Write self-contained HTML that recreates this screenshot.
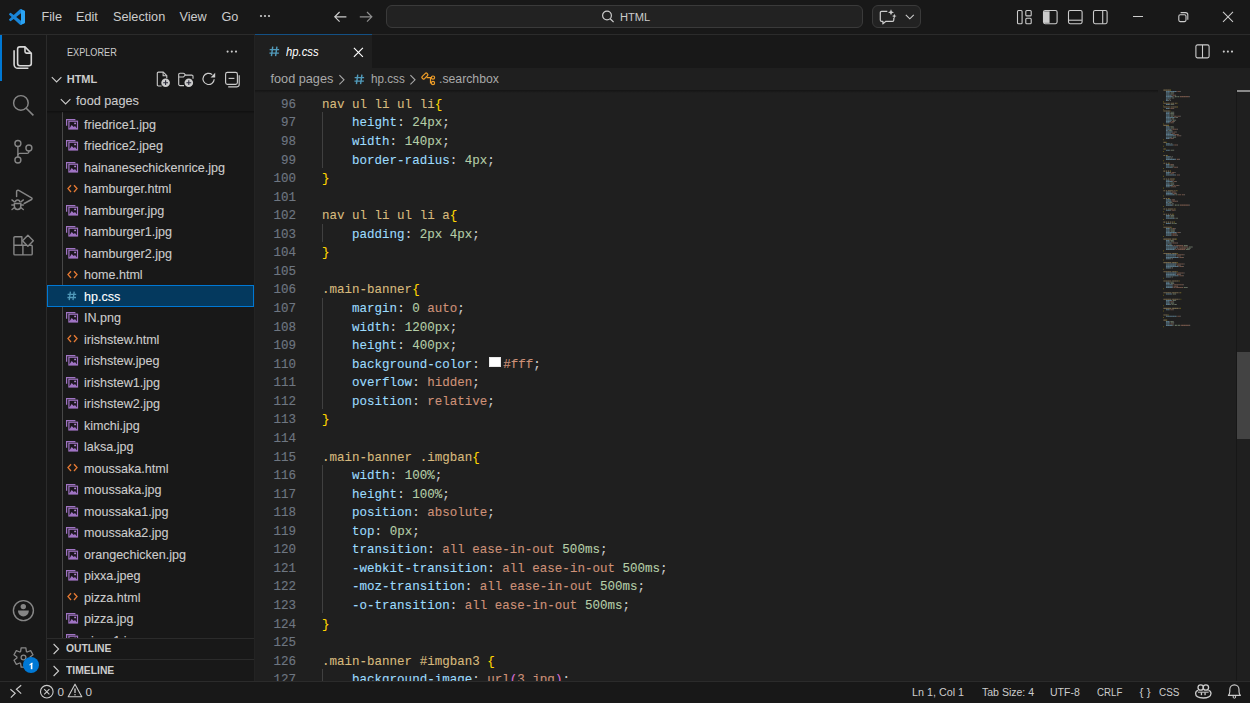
<!DOCTYPE html>
<html><head><meta charset="utf-8">
<style>
*{margin:0;padding:0;box-sizing:border-box}
html,body{width:1250px;height:703px;overflow:hidden;background:#181818;font-family:"Liberation Sans",sans-serif;color:#cccccc}
.abs{position:absolute}
svg{position:absolute;overflow:visible}
#title{left:0;top:0;width:1250px;height:35px;background:#181818;border-bottom:1px solid #2b2b2b}
.menu{position:absolute;top:0;height:33px;line-height:33px;font-size:12.7px;color:#cccccc;white-space:nowrap}
#act{left:0;top:35px;width:47px;height:647px;background:#181818;border-right:1px solid #2b2b2b}
#side{left:47px;top:35px;width:208px;height:647px;background:#181818;border-right:1px solid #232323;overflow:hidden}
#tabs{left:255px;top:34px;width:995px;height:34px;background:#181818;border-bottom:1px solid #2b2b2b}
#crumbs{left:255px;top:67px;width:995px;height:23px;background:#1f1f1f}
#editor{left:255px;top:90px;width:995px;height:590px;background:#1f1f1f;overflow:hidden}
#status{left:0;top:680px;width:1250px;height:23px;background:#181818;border-top:1px solid #2b2b2b}
.row{position:absolute;left:0;width:207px;height:21.5px;font-size:12.7px;line-height:21.5px;white-space:nowrap;color:#cccccc}
.row .t{position:absolute;left:37px;top:0}
.code{position:absolute;left:67px;font-family:"Liberation Mono",monospace;font-size:12.53px;-webkit-text-stroke:0.1px currentColor;white-space:pre;height:18.55px;line-height:18.55px;color:#cccccc}
.ln{position:absolute;left:0;width:41px;text-align:right;font-family:"Liberation Mono",monospace;font-size:12.53px;-webkit-text-stroke:0.15px currentColor;color:#6e7681;height:18.55px;line-height:18.55px}
.guide{position:absolute;left:67px;width:1px;background:#404040}
.s{color:#d7ba7d}.p{color:#9cdcfe}.n{color:#b5cea8}.v{color:#ce9178}.b{color:#ffd700}.o{color:#da70d6}
.sb{position:absolute;top:0;height:22px;line-height:22px;font-size:11.7px;color:#cccccc;white-space:nowrap}
</style></head><body>

<div id="title" class="abs"></div>
<svg style="left:9px;top:9px" width="16" height="16" viewBox="0 0 100 100"><path fill="#1a86d8" fill-rule="evenodd" d="M96.46 10.8L75.86.87a6.23 6.23 0 0 0-7.1 1.2L29.4 38.04 12.24 25.02a4.16 4.16 0 0 0-5.32.24L1.41 30.26a4.17 4.17 0 0 0 0 6.16L16.29 50 1.41 63.58a4.17 4.17 0 0 0 0 6.16l5.51 5a4.16 4.16 0 0 0 5.32.24l17.16-13.02 39.36 35.97a6.22 6.22 0 0 0 7.1 1.2l20.6-9.92A6.24 6.24 0 0 0 100 83.57V16.43a6.24 6.24 0 0 0-3.54-5.63zM75.02 72.7L45.11 50l29.91-22.7z"/><path fill="#2aa3f3" d="M75.02 1.2L96.46 10.8A6.24 6.24 0 0 1 100 16.43V83.57a6.24 6.24 0 0 1-3.54 5.63L75.02 98.8z"/></svg>
<div class="abs" style="left:41.5px;top:9.58px;font-family:'Liberation Sans';font-size:12.7px;line-height:15.24px;color:#cccccc;font-weight:normal;font-style:normal;white-space:pre;">File</div>
<div class="abs" style="left:76px;top:9.58px;font-family:'Liberation Sans';font-size:12.7px;line-height:15.24px;color:#cccccc;font-weight:normal;font-style:normal;white-space:pre;">Edit</div>
<div class="abs" style="left:113px;top:9.58px;font-family:'Liberation Sans';font-size:12.7px;line-height:15.24px;color:#cccccc;font-weight:normal;font-style:normal;white-space:pre;">Selection</div>
<div class="abs" style="left:179.5px;top:9.58px;font-family:'Liberation Sans';font-size:12.7px;line-height:15.24px;color:#cccccc;font-weight:normal;font-style:normal;white-space:pre;">View</div>
<div class="abs" style="left:221.5px;top:9.58px;font-family:'Liberation Sans';font-size:12.7px;line-height:15.24px;color:#cccccc;font-weight:normal;font-style:normal;white-space:pre;">Go</div>
<svg style="left:259px;top:14px" width="12" height="4"><circle cx="2" cy="2" r="1.1" fill="#cccccc"/><circle cx="6" cy="2" r="1.1" fill="#cccccc"/><circle cx="10" cy="2" r="1.1" fill="#cccccc"/></svg>
<svg style="left:333px;top:10px" width="15" height="14" viewBox="0 0 15 14"><path d="M1.8 6.8H13.4M6.6 2L1.8 6.8 6.6 11.6" stroke="#cccccc" stroke-width="1.2" fill="none"/></svg>
<svg style="left:359px;top:10px" width="15" height="14" viewBox="0 0 15 14"><path d="M12.8 6.8H0.8M8 2L12.8 6.8 8 11.6" stroke="#8f8f8f" stroke-width="1.2" fill="none"/></svg>
<div class="abs" style="left:386px;top:5px;width:477px;height:23px;border:1px solid #3a3a3a;border-radius:6px;background:#222222"></div>
<svg style="left:601px;top:10px" width="14" height="13" viewBox="0 0 14 13"><circle cx="6" cy="5.5" r="4.4" stroke="#cccccc" stroke-width="1.2" fill="none"/><path d="M9.2 8.7L12.6 12.1" stroke="#cccccc" stroke-width="1.3"/></svg>
<div class="abs" style="left:620px;top:9.83px;font-family:'Liberation Sans';font-size:11.7px;line-height:14.04px;color:#cccccc;font-weight:normal;font-style:normal;white-space:pre;transform:scaleX(0.95);transform-origin:0 0;">HTML</div>
<div class="abs" style="left:872px;top:5px;width:49px;height:23px;border:1px solid #3a3a3a;border-radius:6px;background:#222222"></div>
<svg style="left:879px;top:9px" width="18" height="16" viewBox="0 0 18 16"><path d="M8.3 2.4H2.6a1.3 1.3 0 0 0-1.3 1.3v7.3a1.3 1.3 0 0 0 1.3 1.3h1.3v2.6l3-2.6h6.6a1.3 1.3 0 0 0 1.3-1.3V8.8" stroke="#cccccc" stroke-width="1.2" fill="none" stroke-linejoin="round"/><path d="M12 0.3l.9 2.1 2.1.9-2.1.9-.9 2.1-.9-2.1-2.1-.9 2.1-.9z" fill="#cccccc"/><path d="M15.3 4.8l.7 1.6 1.6.7-1.6.7-.7 1.6-.7-1.6-1.6-.7 1.6-.7z" fill="#cccccc"/></svg>
<svg style="left:905px;top:14px" width="10" height="6" viewBox="0 0 10 6"><path d="M0.8 0.8L4.8 4.8 8.8 0.8" stroke="#cccccc" stroke-width="1.1" fill="none"/></svg>
<svg style="left:1016px;top:9px" width="17" height="16" viewBox="0 0 17 16"><rect x="1.5" y="1.5" width="4.6" height="13.2" rx="1" stroke="#cccccc" stroke-width="1.1" fill="none"/><rect x="9.8" y="1.5" width="5.4" height="5.4" rx="1" stroke="#cccccc" stroke-width="1.1" fill="none"/><rect x="9.8" y="9.3" width="5.4" height="5.4" rx="1" stroke="#cccccc" stroke-width="1.1" fill="none"/></svg>
<svg style="left:1042px;top:9px" width="17" height="16" viewBox="0 0 17 16"><rect x="1.5" y="1.5" width="13.6" height="13.2" rx="1.6" stroke="#cccccc" stroke-width="1.1" fill="none"/><path d="M2 2.3h5.6v11.6H2z" fill="#cccccc"/></svg>
<svg style="left:1067px;top:9px" width="17" height="16" viewBox="0 0 17 16"><rect x="1.5" y="1.5" width="13.6" height="13.2" rx="1.6" stroke="#cccccc" stroke-width="1.1" fill="none"/><path d="M1.8 11.2h13" stroke="#cccccc" stroke-width="1.1"/></svg>
<svg style="left:1092px;top:9px" width="17" height="16" viewBox="0 0 17 16"><rect x="1.5" y="1.5" width="13.6" height="13.2" rx="1.6" stroke="#cccccc" stroke-width="1.1" fill="none"/><path d="M10.7 1.8v13" stroke="#cccccc" stroke-width="1.1"/></svg>
<div class="abs" style="left:1133.2px;top:16px;width:9.8px;height:1px;background:#cccccc"></div>
<svg style="left:1177px;top:11px" width="13" height="13" viewBox="0 0 13 13"><rect x="1.8" y="3.7" width="7.2" height="6.9" rx="1.5" stroke="#cccccc" stroke-width="1.1" fill="none"/><path d="M3.6 1.6h5a2.2 2.2 0 0 1 2.2 2.2v5" stroke="#cccccc" stroke-width="1.1" fill="none"/></svg>
<svg style="left:1222px;top:11px" width="12" height="12" viewBox="0 0 12 12"><path d="M1 0.8L11 10.8M11 0.8L1 10.8" stroke="#cccccc" stroke-width="1.05" fill="none"/></svg>
<div id="act" class="abs"></div>
<div class="abs" style="left:0;top:35px;width:2px;height:46px;background:#0078d4"></div>
<svg style="left:11px;top:45px" width="24" height="26" viewBox="0 0 24 26"><path d="M8.8 1.9H14l6.3 6.3v10.3a2.2 2.2 0 0 1-2.2 2.2H8.8a2.2 2.2 0 0 1-2.2-2.2V4.1a2.2 2.2 0 0 1 2.2-2.2z" stroke="#d7d7d7" stroke-width="1.6" fill="none" stroke-linejoin="round"/><path d="M14 2v4.6a1.5 1.5 0 0 0 1.5 1.5h4.7" stroke="#d7d7d7" stroke-width="1.6" fill="none"/><path d="M3.1 5.2v14.2a3.9 3.9 0 0 0 3.9 3.9h10.4" stroke="#d7d7d7" stroke-width="1.6" fill="none"/></svg>
<svg style="left:12.3px;top:93.7px" width="23" height="23" viewBox="0 0 23 23"><circle cx="8.9" cy="8.9" r="7.3" stroke="#868686" stroke-width="1.45" fill="none"/><path d="M14.2 14.2L21.4 21.4" stroke="#868686" stroke-width="1.6"/></svg>
<svg style="left:13.4px;top:139.2px" width="22" height="26" viewBox="0 0 22 26"><circle cx="4.9" cy="4.5" r="3" stroke="#868686" stroke-width="1.4" fill="none"/><circle cx="4.9" cy="21" r="3" stroke="#868686" stroke-width="1.4" fill="none"/><circle cx="15.9" cy="9" r="3" stroke="#868686" stroke-width="1.4" fill="none"/><path d="M4.9 7.5V18" stroke="#868686" stroke-width="1.4"/><path d="M15.9 12v0.6a1.8 1.8 0 0 1-1.8 1.8H6.8a1.9 1.9 0 0 0-1.9 1.9" stroke="#868686" stroke-width="1.4" fill="none"/></svg>
<svg style="left:10px;top:188px" width="24" height="24" viewBox="0 0 24 24"><path d="M6.6 8.6V3.6a1.4 1.4 0 0 1 2.1-1.2l12.9 7.4a1 1 0 0 1 0 1.7l-7.4 4" stroke="#868686" stroke-width="1.45" fill="none" stroke-linejoin="round" stroke-linecap="round"/><path d="M4.4 15.4h6.4v2.8a3.2 3.2 0 0 1-6.4 0z" stroke="#868686" stroke-width="1.45" fill="none"/><path d="M5.4 14.2a2.2 2.2 0 0 1 4.4 0" stroke="#868686" stroke-width="1.45" fill="none"/><path d="M1.9 11.9l2.6 2M13.4 11.9l-2.6 2M1.8 17h2.6M10.8 17h2.6M2 21.5l2.6-2M13.3 21.5l-2.6-2" stroke="#868686" stroke-width="1.35" stroke-linecap="round"/></svg>
<svg style="left:12px;top:234px" width="23" height="23" viewBox="0 0 23 23"><path d="M1.9 11.3V3.8a1 1 0 0 1 1-1h7v8.5zM1.9 11.3v8.6a1 1 0 0 0 1 1h8V11.3zM10.9 11.3h8.3a1 1 0 0 1 1 1v7.6a1 1 0 0 1-1 1h-8.3z" stroke="#868686" stroke-width="1.4" fill="none" stroke-linejoin="round"/><path d="M15.9 1.2l5.4 5.5-5.4 5.5-5.4-5.5z" stroke="#868686" stroke-width="1.4" fill="#181818" stroke-linejoin="round"/></svg>
<svg style="left:12px;top:599px" width="23" height="23" viewBox="0 0 23 23"><circle cx="11.4" cy="11.6" r="10" stroke="#868686" stroke-width="1.4" fill="none"/><circle cx="11.3" cy="7.6" r="2.7" fill="#868686"/><path d="M6 11.6h10.8v.4a5.4 5.4 0 0 1-10.8 0z" fill="#868686"/></svg>
<svg style="left:12px;top:646px" width="23" height="23" viewBox="0 0 23 23"><path d="M9.15 1.88 L13.85 1.88 L14.43 5.59 L15.16 6.01 L18.65 4.65 L21.00 8.73 L18.09 11.08 L18.09 11.92 L21.00 14.27 L18.65 18.35 L15.16 16.99 L14.43 17.41 L13.85 21.12 L9.15 21.12 L8.57 17.41 L7.84 16.99 L4.35 18.35 L2.00 14.27 L4.91 11.92 L4.91 11.08 L2.00 8.73 L4.35 4.65 L7.84 6.01 L8.57 5.59Z" stroke="#868686" stroke-width="1.3" fill="none" stroke-linejoin="round"/><circle cx="11.5" cy="11.5" r="2.4" stroke="#868686" stroke-width="1.3" fill="none"/></svg>
<div class="abs" style="left:23.3px;top:657.4px;width:15.4px;height:15.4px;border-radius:8px;background:#0078d4"></div>
<svg style="left:28px;top:661px" width="7" height="9" viewBox="0 0 7 9"><path d="M3.6 1.9V8.2" stroke="#ffffff" stroke-width="1.6"/><path d="M1.4 3.4L4.4 1.4V2.9L1.4 4.6z" fill="#ffffff"/></svg>
<div id="side" class="abs"></div>
<div class="abs" style="left:67px;top:43px;font-size:11px;line-height:18px;white-space:pre;color:#cccccc;transform:scaleX(0.83);transform-origin:0 0">EXPLORER</div>
<svg style="left:226px;top:50px" width="12" height="4"><circle cx="1.6" cy="1.6" r="1.05" fill="#cccccc"/><circle cx="5.8" cy="1.6" r="1.05" fill="#cccccc"/><circle cx="10" cy="1.6" r="1.05" fill="#cccccc"/></svg>
<svg style="left:51px;top:76px" width="12" height="8" viewBox="0 0 12 8"><path d="M0.8 1.2L5.6 6 10.4 1.2" stroke="#cccccc" stroke-width="1.1" fill="none"/></svg>
<div class="abs" style="left:66.7px;top:72.99px;font-family:'Liberation Sans';font-size:11px;line-height:13.2px;color:#cccccc;font-weight:bold;font-style:normal;white-space:pre;">HTML</div>
<svg style="left:155px;top:71px" width="16" height="17" viewBox="0 0 16 17"><path d="M6.6 15H3.4a1.1 1.1 0 0 1-1.1-1.1V2.2a1.1 1.1 0 0 1 1.1-1.1h4.9l3.5 3.5v2.6" stroke="#cccccc" stroke-width="1.1" fill="none" stroke-linejoin="round"/><path d="M8.1 1.3v3.4h3.6" stroke="#cccccc" stroke-width="1.05" fill="none"/><circle cx="10.6" cy="11.7" r="4.3" fill="#cccccc"/><path d="M10.6 9.3v4.8M8.2 11.7h4.8" stroke="#2a2a3a" stroke-width="1.1"/></svg>
<svg style="left:177px;top:71px" width="18" height="17" viewBox="0 0 18 17"><path d="M7 14.6H3a1.3 1.3 0 0 1-1.3-1.3V3.6A1.3 1.3 0 0 1 3 2.3h3.4a1.2 1.2 0 0 1 .9.4l1.2 1.4h6.2a1.3 1.3 0 0 1 1.3 1.3v2.4" stroke="#cccccc" stroke-width="1.1" fill="none" stroke-linejoin="round"/><path d="M1.8 6h4.6l1.8-1.8" stroke="#cccccc" stroke-width="1.05" fill="none"/><circle cx="11.8" cy="11.7" r="4.3" fill="#cccccc"/><path d="M11.8 9.3v4.8M9.4 11.7h4.8" stroke="#2a2a3a" stroke-width="1.1"/></svg>
<svg style="left:202px;top:72px" width="15" height="14" viewBox="0 0 15 14"><path d="M12.2 7.2a5.6 5.6 0 1 1-2-4.6" stroke="#cccccc" stroke-width="1.2" fill="none"/><path d="M13.2 0.8v4.6H8.6z" fill="#cccccc"/></svg>
<svg style="left:224px;top:71px" width="17" height="17" viewBox="0 0 17 17"><rect x="1.6" y="1.4" width="11.8" height="12" rx="1.8" stroke="#cccccc" stroke-width="1.15" fill="none"/><path d="M4.6 7.4h5.8" stroke="#cccccc" stroke-width="1.1"/><path d="M15.2 4.2v9.4a2.2 2.2 0 0 1-2.2 2.2H4.2" stroke="#cccccc" stroke-width="1.15" fill="none"/></svg>
<svg style="left:60px;top:98px" width="12" height="8" viewBox="0 0 12 8"><path d="M0.8 1.2L5.6 6 10.4 1.2" stroke="#cccccc" stroke-width="1.1" fill="none"/></svg>
<div class="abs" style="left:76.1px;top:94.08px;font-family:'Liberation Sans';font-size:12.7px;line-height:15.24px;color:#cccccc;font-weight:normal;font-style:normal;white-space:pre;-webkit-text-stroke:0.1px currentColor;">food pages</div>
<div class="abs" style="left:62px;top:112px;width:1px;height:526px;background:#474747"></div>
<div class="abs" style="left:47px;top:112px;width:207px;height:526px;overflow:hidden">
<svg style="left:19px;top:6.90px" width="13" height="11" viewBox="0 0 13 11"><path d="M0.6 6.8V0.6H9.4" stroke="#a074c4" stroke-width="1.2" fill="none"/><rect x="2.9" y="2.2" width="8.6" height="7.8" stroke="#a074c4" stroke-width="1.2" fill="#1c1620"/><path d="M3 9.9L5.7 6 7.7 7.9 9 7 11.4 9.9z" fill="#a074c4"/><circle cx="9.1" cy="4.4" r="0.95" fill="#b08ad0"/></svg>
<div class="abs" style="left:37.3px;top:5.98px;font-family:'Liberation Sans';font-size:12.7px;line-height:15.24px;color:#cccccc;font-weight:normal;font-style:normal;white-space:pre;transform:scaleX(0.99);transform-origin:0 0;-webkit-text-stroke:0.1px currentColor;">friedrice1.jpg</div>
<svg style="left:19px;top:28.38px" width="13" height="11" viewBox="0 0 13 11"><path d="M0.6 6.8V0.6H9.4" stroke="#a074c4" stroke-width="1.2" fill="none"/><rect x="2.9" y="2.2" width="8.6" height="7.8" stroke="#a074c4" stroke-width="1.2" fill="#1c1620"/><path d="M3 9.9L5.7 6 7.7 7.9 9 7 11.4 9.9z" fill="#a074c4"/><circle cx="9.1" cy="4.4" r="0.95" fill="#b08ad0"/></svg>
<div class="abs" style="left:37.3px;top:27.46px;font-family:'Liberation Sans';font-size:12.7px;line-height:15.24px;color:#cccccc;font-weight:normal;font-style:normal;white-space:pre;transform:scaleX(0.99);transform-origin:0 0;-webkit-text-stroke:0.1px currentColor;">friedrice2.jpeg</div>
<svg style="left:19px;top:49.86px" width="13" height="11" viewBox="0 0 13 11"><path d="M0.6 6.8V0.6H9.4" stroke="#a074c4" stroke-width="1.2" fill="none"/><rect x="2.9" y="2.2" width="8.6" height="7.8" stroke="#a074c4" stroke-width="1.2" fill="#1c1620"/><path d="M3 9.9L5.7 6 7.7 7.9 9 7 11.4 9.9z" fill="#a074c4"/><circle cx="9.1" cy="4.4" r="0.95" fill="#b08ad0"/></svg>
<div class="abs" style="left:37.3px;top:48.94px;font-family:'Liberation Sans';font-size:12.7px;line-height:15.24px;color:#cccccc;font-weight:normal;font-style:normal;white-space:pre;transform:scaleX(0.99);transform-origin:0 0;-webkit-text-stroke:0.1px currentColor;">hainanesechickenrice.jpg</div>
<svg style="left:19.5px;top:71.84px" width="12" height="10" viewBox="0 0 12 10"><path d="M4 1.2L1 4.6 4 8M7 1.2L10 4.6 7 8" stroke="#e37933" stroke-width="1.35" fill="none"/></svg>
<div class="abs" style="left:37.3px;top:70.42px;font-family:'Liberation Sans';font-size:12.7px;line-height:15.24px;color:#cccccc;font-weight:normal;font-style:normal;white-space:pre;transform:scaleX(0.99);transform-origin:0 0;-webkit-text-stroke:0.1px currentColor;">hamburger.html</div>
<svg style="left:19px;top:92.82px" width="13" height="11" viewBox="0 0 13 11"><path d="M0.6 6.8V0.6H9.4" stroke="#a074c4" stroke-width="1.2" fill="none"/><rect x="2.9" y="2.2" width="8.6" height="7.8" stroke="#a074c4" stroke-width="1.2" fill="#1c1620"/><path d="M3 9.9L5.7 6 7.7 7.9 9 7 11.4 9.9z" fill="#a074c4"/><circle cx="9.1" cy="4.4" r="0.95" fill="#b08ad0"/></svg>
<div class="abs" style="left:37.3px;top:91.90px;font-family:'Liberation Sans';font-size:12.7px;line-height:15.24px;color:#cccccc;font-weight:normal;font-style:normal;white-space:pre;transform:scaleX(0.99);transform-origin:0 0;-webkit-text-stroke:0.1px currentColor;">hamburger.jpg</div>
<svg style="left:19px;top:114.30px" width="13" height="11" viewBox="0 0 13 11"><path d="M0.6 6.8V0.6H9.4" stroke="#a074c4" stroke-width="1.2" fill="none"/><rect x="2.9" y="2.2" width="8.6" height="7.8" stroke="#a074c4" stroke-width="1.2" fill="#1c1620"/><path d="M3 9.9L5.7 6 7.7 7.9 9 7 11.4 9.9z" fill="#a074c4"/><circle cx="9.1" cy="4.4" r="0.95" fill="#b08ad0"/></svg>
<div class="abs" style="left:37.3px;top:113.38px;font-family:'Liberation Sans';font-size:12.7px;line-height:15.24px;color:#cccccc;font-weight:normal;font-style:normal;white-space:pre;transform:scaleX(0.99);transform-origin:0 0;-webkit-text-stroke:0.1px currentColor;">hamburger1.jpg</div>
<svg style="left:19px;top:135.78px" width="13" height="11" viewBox="0 0 13 11"><path d="M0.6 6.8V0.6H9.4" stroke="#a074c4" stroke-width="1.2" fill="none"/><rect x="2.9" y="2.2" width="8.6" height="7.8" stroke="#a074c4" stroke-width="1.2" fill="#1c1620"/><path d="M3 9.9L5.7 6 7.7 7.9 9 7 11.4 9.9z" fill="#a074c4"/><circle cx="9.1" cy="4.4" r="0.95" fill="#b08ad0"/></svg>
<div class="abs" style="left:37.3px;top:134.86px;font-family:'Liberation Sans';font-size:12.7px;line-height:15.24px;color:#cccccc;font-weight:normal;font-style:normal;white-space:pre;transform:scaleX(0.99);transform-origin:0 0;-webkit-text-stroke:0.1px currentColor;">hamburger2.jpg</div>
<svg style="left:19.5px;top:157.76px" width="12" height="10" viewBox="0 0 12 10"><path d="M4 1.2L1 4.6 4 8M7 1.2L10 4.6 7 8" stroke="#e37933" stroke-width="1.35" fill="none"/></svg>
<div class="abs" style="left:37.3px;top:156.34px;font-family:'Liberation Sans';font-size:12.7px;line-height:15.24px;color:#cccccc;font-weight:normal;font-style:normal;white-space:pre;transform:scaleX(0.99);transform-origin:0 0;-webkit-text-stroke:0.1px currentColor;">home.html</div>
<div class="abs" style="left:0;top:173.04px;width:207px;height:21.5px;background:#04395e;border:1px solid #0078d4"></div>
<svg style="left:20px;top:178.74px" width="10" height="10" viewBox="0 0 10 10"><path d="M3.4 0.6L2.2 9.2M7.2 0.6L6 9.2M0.6 3.3h8.6M0.4 6.5h8.6" stroke="#519aba" stroke-width="1.3" fill="none"/></svg>
<div class="abs" style="left:37.3px;top:177.82px;font-family:'Liberation Sans';font-size:12.7px;line-height:15.24px;color:#ffffff;font-weight:normal;font-style:normal;white-space:pre;transform:scaleX(0.99);transform-origin:0 0;-webkit-text-stroke:0.1px currentColor;">hp.css</div>
<svg style="left:19px;top:200.22px" width="13" height="11" viewBox="0 0 13 11"><path d="M0.6 6.8V0.6H9.4" stroke="#a074c4" stroke-width="1.2" fill="none"/><rect x="2.9" y="2.2" width="8.6" height="7.8" stroke="#a074c4" stroke-width="1.2" fill="#1c1620"/><path d="M3 9.9L5.7 6 7.7 7.9 9 7 11.4 9.9z" fill="#a074c4"/><circle cx="9.1" cy="4.4" r="0.95" fill="#b08ad0"/></svg>
<div class="abs" style="left:37.3px;top:199.30px;font-family:'Liberation Sans';font-size:12.7px;line-height:15.24px;color:#cccccc;font-weight:normal;font-style:normal;white-space:pre;transform:scaleX(0.99);transform-origin:0 0;-webkit-text-stroke:0.1px currentColor;">IN.png</div>
<svg style="left:19.5px;top:222.20px" width="12" height="10" viewBox="0 0 12 10"><path d="M4 1.2L1 4.6 4 8M7 1.2L10 4.6 7 8" stroke="#e37933" stroke-width="1.35" fill="none"/></svg>
<div class="abs" style="left:37.3px;top:220.78px;font-family:'Liberation Sans';font-size:12.7px;line-height:15.24px;color:#cccccc;font-weight:normal;font-style:normal;white-space:pre;transform:scaleX(0.99);transform-origin:0 0;-webkit-text-stroke:0.1px currentColor;">irishstew.html</div>
<svg style="left:19px;top:243.18px" width="13" height="11" viewBox="0 0 13 11"><path d="M0.6 6.8V0.6H9.4" stroke="#a074c4" stroke-width="1.2" fill="none"/><rect x="2.9" y="2.2" width="8.6" height="7.8" stroke="#a074c4" stroke-width="1.2" fill="#1c1620"/><path d="M3 9.9L5.7 6 7.7 7.9 9 7 11.4 9.9z" fill="#a074c4"/><circle cx="9.1" cy="4.4" r="0.95" fill="#b08ad0"/></svg>
<div class="abs" style="left:37.3px;top:242.26px;font-family:'Liberation Sans';font-size:12.7px;line-height:15.24px;color:#cccccc;font-weight:normal;font-style:normal;white-space:pre;transform:scaleX(0.99);transform-origin:0 0;-webkit-text-stroke:0.1px currentColor;">irishstew.jpeg</div>
<svg style="left:19px;top:264.66px" width="13" height="11" viewBox="0 0 13 11"><path d="M0.6 6.8V0.6H9.4" stroke="#a074c4" stroke-width="1.2" fill="none"/><rect x="2.9" y="2.2" width="8.6" height="7.8" stroke="#a074c4" stroke-width="1.2" fill="#1c1620"/><path d="M3 9.9L5.7 6 7.7 7.9 9 7 11.4 9.9z" fill="#a074c4"/><circle cx="9.1" cy="4.4" r="0.95" fill="#b08ad0"/></svg>
<div class="abs" style="left:37.3px;top:263.74px;font-family:'Liberation Sans';font-size:12.7px;line-height:15.24px;color:#cccccc;font-weight:normal;font-style:normal;white-space:pre;transform:scaleX(0.99);transform-origin:0 0;-webkit-text-stroke:0.1px currentColor;">irishstew1.jpg</div>
<svg style="left:19px;top:286.14px" width="13" height="11" viewBox="0 0 13 11"><path d="M0.6 6.8V0.6H9.4" stroke="#a074c4" stroke-width="1.2" fill="none"/><rect x="2.9" y="2.2" width="8.6" height="7.8" stroke="#a074c4" stroke-width="1.2" fill="#1c1620"/><path d="M3 9.9L5.7 6 7.7 7.9 9 7 11.4 9.9z" fill="#a074c4"/><circle cx="9.1" cy="4.4" r="0.95" fill="#b08ad0"/></svg>
<div class="abs" style="left:37.3px;top:285.22px;font-family:'Liberation Sans';font-size:12.7px;line-height:15.24px;color:#cccccc;font-weight:normal;font-style:normal;white-space:pre;transform:scaleX(0.99);transform-origin:0 0;-webkit-text-stroke:0.1px currentColor;">irishstew2.jpg</div>
<svg style="left:19px;top:307.62px" width="13" height="11" viewBox="0 0 13 11"><path d="M0.6 6.8V0.6H9.4" stroke="#a074c4" stroke-width="1.2" fill="none"/><rect x="2.9" y="2.2" width="8.6" height="7.8" stroke="#a074c4" stroke-width="1.2" fill="#1c1620"/><path d="M3 9.9L5.7 6 7.7 7.9 9 7 11.4 9.9z" fill="#a074c4"/><circle cx="9.1" cy="4.4" r="0.95" fill="#b08ad0"/></svg>
<div class="abs" style="left:37.3px;top:306.70px;font-family:'Liberation Sans';font-size:12.7px;line-height:15.24px;color:#cccccc;font-weight:normal;font-style:normal;white-space:pre;transform:scaleX(0.99);transform-origin:0 0;-webkit-text-stroke:0.1px currentColor;">kimchi.jpg</div>
<svg style="left:19px;top:329.10px" width="13" height="11" viewBox="0 0 13 11"><path d="M0.6 6.8V0.6H9.4" stroke="#a074c4" stroke-width="1.2" fill="none"/><rect x="2.9" y="2.2" width="8.6" height="7.8" stroke="#a074c4" stroke-width="1.2" fill="#1c1620"/><path d="M3 9.9L5.7 6 7.7 7.9 9 7 11.4 9.9z" fill="#a074c4"/><circle cx="9.1" cy="4.4" r="0.95" fill="#b08ad0"/></svg>
<div class="abs" style="left:37.3px;top:328.18px;font-family:'Liberation Sans';font-size:12.7px;line-height:15.24px;color:#cccccc;font-weight:normal;font-style:normal;white-space:pre;transform:scaleX(0.99);transform-origin:0 0;-webkit-text-stroke:0.1px currentColor;">laksa.jpg</div>
<svg style="left:19.5px;top:351.08px" width="12" height="10" viewBox="0 0 12 10"><path d="M4 1.2L1 4.6 4 8M7 1.2L10 4.6 7 8" stroke="#e37933" stroke-width="1.35" fill="none"/></svg>
<div class="abs" style="left:37.3px;top:349.66px;font-family:'Liberation Sans';font-size:12.7px;line-height:15.24px;color:#cccccc;font-weight:normal;font-style:normal;white-space:pre;transform:scaleX(0.99);transform-origin:0 0;-webkit-text-stroke:0.1px currentColor;">moussaka.html</div>
<svg style="left:19px;top:372.06px" width="13" height="11" viewBox="0 0 13 11"><path d="M0.6 6.8V0.6H9.4" stroke="#a074c4" stroke-width="1.2" fill="none"/><rect x="2.9" y="2.2" width="8.6" height="7.8" stroke="#a074c4" stroke-width="1.2" fill="#1c1620"/><path d="M3 9.9L5.7 6 7.7 7.9 9 7 11.4 9.9z" fill="#a074c4"/><circle cx="9.1" cy="4.4" r="0.95" fill="#b08ad0"/></svg>
<div class="abs" style="left:37.3px;top:371.14px;font-family:'Liberation Sans';font-size:12.7px;line-height:15.24px;color:#cccccc;font-weight:normal;font-style:normal;white-space:pre;transform:scaleX(0.99);transform-origin:0 0;-webkit-text-stroke:0.1px currentColor;">moussaka.jpg</div>
<svg style="left:19px;top:393.54px" width="13" height="11" viewBox="0 0 13 11"><path d="M0.6 6.8V0.6H9.4" stroke="#a074c4" stroke-width="1.2" fill="none"/><rect x="2.9" y="2.2" width="8.6" height="7.8" stroke="#a074c4" stroke-width="1.2" fill="#1c1620"/><path d="M3 9.9L5.7 6 7.7 7.9 9 7 11.4 9.9z" fill="#a074c4"/><circle cx="9.1" cy="4.4" r="0.95" fill="#b08ad0"/></svg>
<div class="abs" style="left:37.3px;top:392.62px;font-family:'Liberation Sans';font-size:12.7px;line-height:15.24px;color:#cccccc;font-weight:normal;font-style:normal;white-space:pre;transform:scaleX(0.99);transform-origin:0 0;-webkit-text-stroke:0.1px currentColor;">moussaka1.jpg</div>
<svg style="left:19px;top:415.02px" width="13" height="11" viewBox="0 0 13 11"><path d="M0.6 6.8V0.6H9.4" stroke="#a074c4" stroke-width="1.2" fill="none"/><rect x="2.9" y="2.2" width="8.6" height="7.8" stroke="#a074c4" stroke-width="1.2" fill="#1c1620"/><path d="M3 9.9L5.7 6 7.7 7.9 9 7 11.4 9.9z" fill="#a074c4"/><circle cx="9.1" cy="4.4" r="0.95" fill="#b08ad0"/></svg>
<div class="abs" style="left:37.3px;top:414.10px;font-family:'Liberation Sans';font-size:12.7px;line-height:15.24px;color:#cccccc;font-weight:normal;font-style:normal;white-space:pre;transform:scaleX(0.99);transform-origin:0 0;-webkit-text-stroke:0.1px currentColor;">moussaka2.jpg</div>
<svg style="left:19px;top:436.50px" width="13" height="11" viewBox="0 0 13 11"><path d="M0.6 6.8V0.6H9.4" stroke="#a074c4" stroke-width="1.2" fill="none"/><rect x="2.9" y="2.2" width="8.6" height="7.8" stroke="#a074c4" stroke-width="1.2" fill="#1c1620"/><path d="M3 9.9L5.7 6 7.7 7.9 9 7 11.4 9.9z" fill="#a074c4"/><circle cx="9.1" cy="4.4" r="0.95" fill="#b08ad0"/></svg>
<div class="abs" style="left:37.3px;top:435.58px;font-family:'Liberation Sans';font-size:12.7px;line-height:15.24px;color:#cccccc;font-weight:normal;font-style:normal;white-space:pre;transform:scaleX(0.99);transform-origin:0 0;-webkit-text-stroke:0.1px currentColor;">orangechicken.jpg</div>
<svg style="left:19px;top:457.98px" width="13" height="11" viewBox="0 0 13 11"><path d="M0.6 6.8V0.6H9.4" stroke="#a074c4" stroke-width="1.2" fill="none"/><rect x="2.9" y="2.2" width="8.6" height="7.8" stroke="#a074c4" stroke-width="1.2" fill="#1c1620"/><path d="M3 9.9L5.7 6 7.7 7.9 9 7 11.4 9.9z" fill="#a074c4"/><circle cx="9.1" cy="4.4" r="0.95" fill="#b08ad0"/></svg>
<div class="abs" style="left:37.3px;top:457.06px;font-family:'Liberation Sans';font-size:12.7px;line-height:15.24px;color:#cccccc;font-weight:normal;font-style:normal;white-space:pre;transform:scaleX(0.99);transform-origin:0 0;-webkit-text-stroke:0.1px currentColor;">pixxa.jpeg</div>
<svg style="left:19.5px;top:479.96px" width="12" height="10" viewBox="0 0 12 10"><path d="M4 1.2L1 4.6 4 8M7 1.2L10 4.6 7 8" stroke="#e37933" stroke-width="1.35" fill="none"/></svg>
<div class="abs" style="left:37.3px;top:478.54px;font-family:'Liberation Sans';font-size:12.7px;line-height:15.24px;color:#cccccc;font-weight:normal;font-style:normal;white-space:pre;transform:scaleX(0.99);transform-origin:0 0;-webkit-text-stroke:0.1px currentColor;">pizza.html</div>
<svg style="left:19px;top:500.94px" width="13" height="11" viewBox="0 0 13 11"><path d="M0.6 6.8V0.6H9.4" stroke="#a074c4" stroke-width="1.2" fill="none"/><rect x="2.9" y="2.2" width="8.6" height="7.8" stroke="#a074c4" stroke-width="1.2" fill="#1c1620"/><path d="M3 9.9L5.7 6 7.7 7.9 9 7 11.4 9.9z" fill="#a074c4"/><circle cx="9.1" cy="4.4" r="0.95" fill="#b08ad0"/></svg>
<div class="abs" style="left:37.3px;top:500.02px;font-family:'Liberation Sans';font-size:12.7px;line-height:15.24px;color:#cccccc;font-weight:normal;font-style:normal;white-space:pre;transform:scaleX(0.99);transform-origin:0 0;-webkit-text-stroke:0.1px currentColor;">pizza.jpg</div>
<svg style="left:19px;top:522.42px" width="13" height="11" viewBox="0 0 13 11"><path d="M0.6 6.8V0.6H9.4" stroke="#a074c4" stroke-width="1.2" fill="none"/><rect x="2.9" y="2.2" width="8.6" height="7.8" stroke="#a074c4" stroke-width="1.2" fill="#1c1620"/><path d="M3 9.9L5.7 6 7.7 7.9 9 7 11.4 9.9z" fill="#a074c4"/><circle cx="9.1" cy="4.4" r="0.95" fill="#b08ad0"/></svg>
<div class="abs" style="left:37.3px;top:521.50px;font-family:'Liberation Sans';font-size:12.7px;line-height:15.24px;color:#cccccc;font-weight:normal;font-style:normal;white-space:pre;transform:scaleX(0.99);transform-origin:0 0;-webkit-text-stroke:0.1px currentColor;">pizza1.jpg</div>
</div>
<div class="abs" style="left:47px;top:111px;width:207px;height:3px;background:linear-gradient(#0000005c,#00000000)"></div>
<div class="abs" style="left:47px;top:638px;width:207px;height:1px;background:#2b2b2b"></div>
<div class="abs" style="left:47px;top:659px;width:207px;height:1px;background:#2b2b2b"></div>
<svg style="left:52px;top:643px" width="10" height="12" viewBox="0 0 10 12"><path d="M1.6 1L6.6 6 1.6 11" stroke="#cccccc" stroke-width="1.1" fill="none"/></svg>
<div class="abs" style="left:66.3px;top:642.19px;font-family:'Liberation Sans';font-size:11px;line-height:13.2px;color:#cccccc;font-weight:bold;font-style:normal;white-space:pre;transform:scaleX(0.94);transform-origin:0 0;">OUTLINE</div>
<svg style="left:52px;top:664.5px" width="10" height="12" viewBox="0 0 10 12"><path d="M1.6 1L6.6 6 1.6 11" stroke="#cccccc" stroke-width="1.1" fill="none"/></svg>
<div class="abs" style="left:66.3px;top:663.69px;font-family:'Liberation Sans';font-size:11px;line-height:13.2px;color:#cccccc;font-weight:bold;font-style:normal;white-space:pre;transform:scaleX(0.94);transform-origin:0 0;">TIMELINE</div>
<div class="abs" style="left:255px;top:35px;width:995px;height:33px;background:#181818"></div>
<div class="abs" style="left:255px;top:34px;width:117px;height:34px;background:#1f1f1f;border-top:1px solid #135084"></div>
<svg style="left:268.5px;top:45.5px" width="11" height="11" viewBox="0 0 10 10"><path d="M3.4 0.6L2.2 9.2M7.2 0.6L6 9.2M0.6 3.3h8.6M0.4 6.5h8.6" stroke="#519aba" stroke-width="1.3" fill="none"/></svg>
<div class="abs" style="left:285.5px;top:45.38px;font-family:'Liberation Sans';font-size:12.7px;line-height:15.24px;color:#ffffff;font-weight:normal;font-style:italic;white-space:pre;transform:scaleX(0.89);transform-origin:0 0;">hp.css</div>
<svg style="left:352.5px;top:46.5px" width="11" height="11" viewBox="0 0 11 11"><path d="M0.9 0.9L9.9 9.9M9.9 0.9L0.9 9.9" stroke="#ffffff" stroke-width="1.15" fill="none"/></svg>
<svg style="left:1195px;top:44px" width="15" height="15" viewBox="0 0 15 15"><rect x="0.9" y="0.9" width="13.2" height="13" rx="1.6" stroke="#cccccc" stroke-width="1.1" fill="none"/><path d="M7.5 1v13" stroke="#cccccc" stroke-width="1.1"/></svg>
<svg style="left:1222px;top:50px" width="12" height="4"><circle cx="1.8" cy="1.6" r="1.05" fill="#cccccc"/><circle cx="5.9" cy="1.6" r="1.05" fill="#cccccc"/><circle cx="10" cy="1.6" r="1.05" fill="#cccccc"/></svg>
<div class="abs" style="left:255px;top:68px;width:995px;height:22px;background:#1f1f1f"></div>
<div class="abs" style="left:270.5px;top:72.38px;font-family:'Liberation Sans';font-size:12.7px;line-height:15.24px;color:#a9a9a9;font-weight:normal;font-style:normal;white-space:pre;">food pages</div>
<svg style="left:337.5px;top:73.5px" width="8" height="12" viewBox="0 0 8 12"><path d="M1.4 1.2L6 5.8 1.4 10.4" stroke="#a9a9a9" stroke-width="1.1" fill="none"/></svg>
<svg style="left:353.5px;top:74px" width="11" height="11" viewBox="0 0 10 10"><path d="M3.4 0.6L2.2 9.2M7.2 0.6L6 9.2M0.6 3.3h8.6M0.4 6.5h8.6" stroke="#519aba" stroke-width="1.3" fill="none"/></svg>
<div class="abs" style="left:370.8px;top:72.38px;font-family:'Liberation Sans';font-size:12.7px;line-height:15.24px;color:#a9a9a9;font-weight:normal;font-style:normal;white-space:pre;transform:scaleX(0.92);transform-origin:0 0;">hp.css</div>
<svg style="left:409px;top:73.5px" width="8" height="12" viewBox="0 0 8 12"><path d="M1.4 1.2L6 5.8 1.4 10.4" stroke="#a9a9a9" stroke-width="1.1" fill="none"/></svg>
<svg style="left:421px;top:72px" width="15" height="14" viewBox="0 0 15 14"><path d="M1.1 4.6L4.4 1.3a1 1 0 0 1 1.4 0l.8.8a1 1 0 0 1 0 1.4L3.3 6.8a1 1 0 0 1-1.4 0l-.8-.8a1 1 0 0 1 0-1.4z" stroke="#ee9d28" stroke-width="1.2" fill="none"/><path d="M5.6 5.6h3.9v5.4h1" stroke="#ee9d28" stroke-width="1.2" fill="none"/><path d="M9.5 5.6h1" stroke="#ee9d28" stroke-width="1.2"/><circle cx="12" cy="5.6" r="1.6" stroke="#ee9d28" stroke-width="1.2" fill="none"/><circle cx="12" cy="11" r="1.6" stroke="#ee9d28" stroke-width="1.2" fill="none"/></svg>
<div class="abs" style="left:438.8px;top:72.38px;font-family:'Liberation Sans';font-size:12.7px;line-height:15.24px;color:#a9a9a9;font-weight:normal;font-style:normal;white-space:pre;transform:scaleX(0.965);transform-origin:0 0;">.searchbox</div>
<div class="abs" style="left:255px;top:90px;width:995px;height:591px;background:#1f1f1f;overflow:hidden">
<div class="ln" style="top:5.88px">96</div>
<div class="code" style="top:5.88px"><span class="s">nav ul li ul li</span><span class="b">{</span></div>
<div class="ln" style="top:24.44px">97</div>
<div class="code" style="top:24.44px">    <span class="p">height</span>: <span class="n">24px</span>;</div>
<div class="ln" style="top:43.00px">98</div>
<div class="code" style="top:43.00px">    <span class="p">width</span>: <span class="n">140px</span>;</div>
<div class="ln" style="top:61.56px">99</div>
<div class="code" style="top:61.56px">    <span class="p">border-radius</span>: <span class="n">4px</span>;</div>
<div class="ln" style="top:80.12px">100</div>
<div class="code" style="top:80.12px"><span class="b">}</span></div>
<div class="ln" style="top:98.68px">101</div>
<div class="code" style="top:98.68px"></div>
<div class="ln" style="top:117.24px">102</div>
<div class="code" style="top:117.24px"><span class="s">nav ul li ul li a</span><span class="b">{</span></div>
<div class="ln" style="top:135.80px">103</div>
<div class="code" style="top:135.80px">    <span class="p">padding</span>: <span class="n">2px 4px</span>;</div>
<div class="ln" style="top:154.36px">104</div>
<div class="code" style="top:154.36px"><span class="b">}</span></div>
<div class="ln" style="top:172.92px">105</div>
<div class="code" style="top:172.92px"></div>
<div class="ln" style="top:191.48px">106</div>
<div class="code" style="top:191.48px"><span class="s">.main-banner</span><span class="b">{</span></div>
<div class="ln" style="top:210.04px">107</div>
<div class="code" style="top:210.04px">    <span class="p">margin</span>: <span class="n">0</span> <span class="v">auto</span>;</div>
<div class="ln" style="top:228.60px">108</div>
<div class="code" style="top:228.60px">    <span class="p">width</span>: <span class="n">1200px</span>;</div>
<div class="ln" style="top:247.16px">109</div>
<div class="code" style="top:247.16px">    <span class="p">height</span>: <span class="n">400px</span>;</div>
<div class="ln" style="top:265.72px">110</div>
<div class="code" style="top:265.72px">    <span class="p">background-color</span>: <span style="display:inline-block;width:16px;height:10px;position:relative;vertical-align:top"><span style="position:absolute;left:2px;top:1.3px;width:11.6px;height:10.2px;background:#fff;border:1px solid #e8e8e8"></span></span><span class="v">#fff</span>;</div>
<div class="ln" style="top:284.28px">111</div>
<div class="code" style="top:284.28px">    <span class="p">overflow</span>: <span class="v">hidden</span>;</div>
<div class="ln" style="top:302.84px">112</div>
<div class="code" style="top:302.84px">    <span class="p">position</span>: <span class="v">relative</span>;</div>
<div class="ln" style="top:321.40px">113</div>
<div class="code" style="top:321.40px"><span class="b">}</span></div>
<div class="ln" style="top:339.96px">114</div>
<div class="code" style="top:339.96px"></div>
<div class="ln" style="top:358.52px">115</div>
<div class="code" style="top:358.52px"><span class="s">.main-banner .imgban</span><span class="b">{</span></div>
<div class="ln" style="top:377.08px">116</div>
<div class="code" style="top:377.08px">    <span class="p">width</span>: <span class="n">100%</span>;</div>
<div class="ln" style="top:395.64px">117</div>
<div class="code" style="top:395.64px">    <span class="p">height</span>: <span class="n">100%</span>;</div>
<div class="ln" style="top:414.20px">118</div>
<div class="code" style="top:414.20px">    <span class="p">position</span>: <span class="v">absolute</span>;</div>
<div class="ln" style="top:432.76px">119</div>
<div class="code" style="top:432.76px">    <span class="p">top</span>: <span class="n">0px</span>;</div>
<div class="ln" style="top:451.32px">120</div>
<div class="code" style="top:451.32px">    <span class="p">transition</span>: <span class="v">all ease-in-out </span><span class="n">500ms</span>;</div>
<div class="ln" style="top:469.88px">121</div>
<div class="code" style="top:469.88px">    <span class="p">-webkit-transition</span>: <span class="v">all ease-in-out </span><span class="n">500ms</span>;</div>
<div class="ln" style="top:488.44px">122</div>
<div class="code" style="top:488.44px">    <span class="p">-moz-transition</span>: <span class="v">all ease-in-out </span><span class="n">500ms</span>;</div>
<div class="ln" style="top:507.00px">123</div>
<div class="code" style="top:507.00px">    <span class="p">-o-transition</span>: <span class="v">all ease-in-out </span><span class="n">500ms</span>;</div>
<div class="ln" style="top:525.56px">124</div>
<div class="code" style="top:525.56px"><span class="b">}</span></div>
<div class="ln" style="top:544.12px">125</div>
<div class="code" style="top:544.12px"></div>
<div class="ln" style="top:562.68px">126</div>
<div class="code" style="top:562.68px"><span class="s">.main-banner #imgban3 </span><span class="b">{</span></div>
<div class="ln" style="top:581.24px">127</div>
<div class="code" style="top:581.24px">    <span class="p">background-image</span>: <span class="v">url</span><span class="o">(</span><span class="v">3.jpg</span><span class="o">)</span>;</div>
<div class="guide" style="top:22.36px;height:55.68px"></div>
<div class="guide" style="top:133.72px;height:18.56px"></div>
<div class="guide" style="top:207.96px;height:111.36px"></div>
<div class="guide" style="top:375.00px;height:148.48px"></div>
<div class="guide" style="top:579.16px;height:18.56px"></div>
</div>
<div class="abs" style="left:255px;top:90px;width:903px;height:3px;background:linear-gradient(#0000005c,#00000000)"></div>
<svg style="left:1158px;top:90px" width="78" height="240" opacity="0.55" stroke-width="1.05" stroke-dasharray="0.5 0.14"><path d="M5.40 0.10h7.04" stroke="#d7ba7d"/><path d="M12.44 0.10h0.64" stroke="#ffd700"/><path d="M7.96 1.41h10.24" stroke="#9cdcfe"/><path d="M18.20 1.41h0.64" stroke="#cccccc"/><path d="M19.48 1.41h2.56" stroke="#ce9178"/><path d="M22.04 1.41h0.64" stroke="#cccccc"/><path d="M7.96 2.71h3.84" stroke="#9cdcfe"/><path d="M11.80 2.71h0.64" stroke="#cccccc"/><path d="M13.08 2.71h2.56" stroke="#b5cea8"/><path d="M15.64 2.71h0.64" stroke="#cccccc"/><path d="M7.96 4.02h3.20" stroke="#9cdcfe"/><path d="M11.16 4.02h0.64" stroke="#cccccc"/><path d="M12.44 4.02h2.56" stroke="#b5cea8"/><path d="M15.00 4.02h0.64" stroke="#cccccc"/><path d="M7.96 5.33h5.12" stroke="#9cdcfe"/><path d="M13.08 5.33h0.64" stroke="#cccccc"/><path d="M14.36 5.33h3.20" stroke="#ce9178"/><path d="M17.56 5.33h0.64" stroke="#cccccc"/><path d="M7.96 6.63h6.40" stroke="#9cdcfe"/><path d="M14.36 6.63h0.64" stroke="#cccccc"/><path d="M15.64 6.63h0.64" stroke="#b5cea8"/><path d="M16.92 6.63h1.92" stroke="#b5cea8"/><path d="M19.48 6.63h1.92" stroke="#b5cea8"/><path d="M22.04 6.63h8.96" stroke="#ce9178"/><path d="M31.00 6.63h0.64" stroke="#cccccc"/><path d="M7.96 7.94h4.48" stroke="#9cdcfe"/><path d="M12.44 7.94h0.64" stroke="#cccccc"/><path d="M13.72 7.94h1.92" stroke="#b5cea8"/><path d="M15.64 7.94h0.64" stroke="#cccccc"/><path d="M7.96 9.25h1.92" stroke="#9cdcfe"/><path d="M9.88 9.25h0.64" stroke="#cccccc"/><path d="M11.16 9.25h0.64" stroke="#b5cea8"/><path d="M11.80 9.25h0.64" stroke="#cccccc"/><path d="M7.96 10.56h2.56" stroke="#9cdcfe"/><path d="M10.52 10.56h0.64" stroke="#cccccc"/><path d="M11.80 10.56h0.64" stroke="#b5cea8"/><path d="M12.44 10.56h0.64" stroke="#cccccc"/><path d="M5.40 11.86h0.64" stroke="#ffd700"/><path d="M5.40 13.17h7.04" stroke="#d7ba7d"/><path d="M13.08 13.17h3.20" stroke="#d7ba7d"/><path d="M16.92 13.17h1.92" stroke="#d7ba7d"/><path d="M18.84 13.17h0.64" stroke="#ffd700"/><path d="M7.96 14.48h3.84" stroke="#9cdcfe"/><path d="M11.80 14.48h0.64" stroke="#cccccc"/><path d="M13.08 14.48h2.56" stroke="#b5cea8"/><path d="M15.64 14.48h0.64" stroke="#cccccc"/><path d="M5.40 15.78h0.64" stroke="#ffd700"/><path d="M5.40 17.09h7.04" stroke="#d7ba7d"/><path d="M13.08 17.09h6.40" stroke="#d7ba7d"/><path d="M19.48 17.09h0.64" stroke="#ffd700"/><path d="M7.96 18.40h3.20" stroke="#9cdcfe"/><path d="M11.16 18.40h0.64" stroke="#cccccc"/><path d="M12.44 18.40h3.20" stroke="#ce9178"/><path d="M15.64 18.40h0.64" stroke="#cccccc"/><path d="M5.40 19.70h0.64" stroke="#ffd700"/><path d="M5.40 21.01h6.40" stroke="#d7ba7d"/><path d="M11.80 21.01h0.64" stroke="#ffd700"/><path d="M7.96 22.32h3.84" stroke="#9cdcfe"/><path d="M11.80 22.32h0.64" stroke="#cccccc"/><path d="M13.08 22.32h2.56" stroke="#b5cea8"/><path d="M15.64 22.32h0.64" stroke="#cccccc"/><path d="M7.96 23.63h3.20" stroke="#9cdcfe"/><path d="M11.16 23.63h0.64" stroke="#cccccc"/><path d="M12.44 23.63h3.20" stroke="#b5cea8"/><path d="M15.64 23.63h0.64" stroke="#cccccc"/><path d="M7.96 24.93h3.84" stroke="#9cdcfe"/><path d="M11.80 24.93h0.64" stroke="#cccccc"/><path d="M13.08 24.93h2.56" stroke="#b5cea8"/><path d="M15.64 24.93h0.64" stroke="#cccccc"/><path d="M7.96 26.24h3.84" stroke="#9cdcfe"/><path d="M11.80 26.24h0.64" stroke="#cccccc"/><path d="M13.08 26.24h1.92" stroke="#b5cea8"/><path d="M15.64 26.24h3.20" stroke="#ce9178"/><path d="M19.48 26.24h2.56" stroke="#ce9178"/><path d="M22.04 26.24h0.64" stroke="#cccccc"/><path d="M7.96 27.55h8.32" stroke="#9cdcfe"/><path d="M16.28 27.55h0.64" stroke="#cccccc"/><path d="M17.56 27.55h1.92" stroke="#b5cea8"/><path d="M19.48 27.55h0.64" stroke="#cccccc"/><path d="M7.96 28.85h4.48" stroke="#9cdcfe"/><path d="M12.44 28.85h0.64" stroke="#cccccc"/><path d="M13.72 28.85h1.92" stroke="#b5cea8"/><path d="M15.64 28.85h0.64" stroke="#cccccc"/><path d="M7.96 30.16h5.76" stroke="#9cdcfe"/><path d="M13.72 30.16h0.64" stroke="#cccccc"/><path d="M15.00 30.16h2.56" stroke="#b5cea8"/><path d="M17.56 30.16h0.64" stroke="#cccccc"/><path d="M7.96 31.47h4.48" stroke="#9cdcfe"/><path d="M12.44 31.47h0.64" stroke="#cccccc"/><path d="M13.72 31.47h2.56" stroke="#ce9178"/><path d="M16.28 31.47h0.64" stroke="#cccccc"/><path d="M7.96 32.77h3.20" stroke="#9cdcfe"/><path d="M11.16 32.77h0.64" stroke="#cccccc"/><path d="M12.44 32.77h2.56" stroke="#ce9178"/><path d="M15.00 32.77h0.64" stroke="#cccccc"/><path d="M5.40 34.08h0.64" stroke="#ffd700"/><path d="M5.40 35.39h5.12" stroke="#d7ba7d"/><path d="M10.52 35.39h0.64" stroke="#ffd700"/><path d="M7.96 36.70h3.20" stroke="#9cdcfe"/><path d="M11.16 36.70h0.64" stroke="#cccccc"/><path d="M12.44 36.70h2.56" stroke="#b5cea8"/><path d="M15.00 36.70h0.64" stroke="#cccccc"/><path d="M7.96 38.00h3.84" stroke="#9cdcfe"/><path d="M11.80 38.00h0.64" stroke="#cccccc"/><path d="M13.08 38.00h2.56" stroke="#b5cea8"/><path d="M15.64 38.00h0.64" stroke="#cccccc"/><path d="M7.96 39.31h5.12" stroke="#9cdcfe"/><path d="M13.08 39.31h0.64" stroke="#cccccc"/><path d="M14.36 39.31h5.12" stroke="#ce9178"/><path d="M19.48 39.31h0.64" stroke="#cccccc"/><path d="M7.96 40.62h1.92" stroke="#9cdcfe"/><path d="M9.88 40.62h0.64" stroke="#cccccc"/><path d="M11.16 40.62h2.56" stroke="#b5cea8"/><path d="M13.72 40.62h0.64" stroke="#cccccc"/><path d="M7.96 41.92h6.40" stroke="#9cdcfe"/><path d="M14.36 41.92h0.64" stroke="#cccccc"/><path d="M15.64 41.92h2.56" stroke="#ce9178"/><path d="M18.20 41.92h0.64" stroke="#cccccc"/><path d="M7.96 43.23h4.48" stroke="#9cdcfe"/><path d="M12.44 43.23h0.64" stroke="#cccccc"/><path d="M13.72 43.23h2.56" stroke="#ce9178"/><path d="M16.28 43.23h0.64" stroke="#cccccc"/><path d="M7.96 44.54h7.04" stroke="#9cdcfe"/><path d="M15.00 44.54h0.64" stroke="#cccccc"/><path d="M16.28 44.54h3.84" stroke="#ce9178"/><path d="M20.12 44.54h0.64" stroke="#cccccc"/><path d="M7.96 45.84h9.60" stroke="#9cdcfe"/><path d="M17.56 45.84h0.64" stroke="#cccccc"/><path d="M18.84 45.84h3.84" stroke="#ce9178"/><path d="M22.68 45.84h0.64" stroke="#cccccc"/><path d="M7.96 47.15h5.76" stroke="#9cdcfe"/><path d="M13.72 47.15h0.64" stroke="#cccccc"/><path d="M15.00 47.15h2.56" stroke="#b5cea8"/><path d="M17.56 47.15h0.64" stroke="#cccccc"/><path d="M7.96 48.46h3.20" stroke="#9cdcfe"/><path d="M11.16 48.46h0.64" stroke="#cccccc"/><path d="M12.44 48.46h2.56" stroke="#ce9178"/><path d="M15.00 48.46h0.64" stroke="#cccccc"/><path d="M5.40 49.77h0.64" stroke="#ffd700"/><path d="M5.40 52.38h2.56" stroke="#d7ba7d"/><path d="M7.96 52.38h0.64" stroke="#ffd700"/><path d="M7.96 53.69h3.84" stroke="#9cdcfe"/><path d="M11.80 53.69h0.64" stroke="#cccccc"/><path d="M13.08 53.69h0.64" stroke="#b5cea8"/><path d="M13.72 53.69h0.64" stroke="#cccccc"/><path d="M7.96 54.99h7.04" stroke="#9cdcfe"/><path d="M15.00 54.99h0.64" stroke="#cccccc"/><path d="M16.28 54.99h3.20" stroke="#ce9178"/><path d="M19.48 54.99h0.64" stroke="#cccccc"/><path d="M5.40 56.30h0.64" stroke="#ffd700"/><path d="M5.40 58.91h1.92" stroke="#d7ba7d"/><path d="M7.32 58.91h0.64" stroke="#ffd700"/><path d="M7.96 60.22h3.84" stroke="#9cdcfe"/><path d="M11.80 60.22h0.64" stroke="#cccccc"/><path d="M13.08 60.22h2.56" stroke="#b5cea8"/><path d="M15.64 60.22h0.64" stroke="#cccccc"/><path d="M5.40 61.53h0.64" stroke="#ffd700"/><path d="M5.40 65.45h1.92" stroke="#d7ba7d"/><path d="M7.96 65.45h1.28" stroke="#d7ba7d"/><path d="M9.24 65.45h0.64" stroke="#ffd700"/><path d="M7.96 66.76h4.48" stroke="#9cdcfe"/><path d="M12.44 66.76h0.64" stroke="#cccccc"/><path d="M13.72 66.76h0.64" stroke="#b5cea8"/><path d="M14.36 66.76h0.64" stroke="#cccccc"/><path d="M7.96 68.06h3.84" stroke="#9cdcfe"/><path d="M11.80 68.06h0.64" stroke="#cccccc"/><path d="M13.08 68.06h0.64" stroke="#b5cea8"/><path d="M13.72 68.06h0.64" stroke="#cccccc"/><path d="M7.96 69.37h9.60" stroke="#9cdcfe"/><path d="M17.56 69.37h0.64" stroke="#cccccc"/><path d="M18.84 69.37h2.56" stroke="#ce9178"/><path d="M21.40 69.37h0.64" stroke="#cccccc"/><path d="M5.40 70.68h0.64" stroke="#ffd700"/><path d="M5.40 73.29h1.92" stroke="#d7ba7d"/><path d="M7.96 73.29h1.28" stroke="#d7ba7d"/><path d="M9.88 73.29h1.28" stroke="#d7ba7d"/><path d="M11.16 73.29h0.64" stroke="#ffd700"/><path d="M7.96 74.60h3.20" stroke="#9cdcfe"/><path d="M11.16 74.60h0.64" stroke="#cccccc"/><path d="M12.44 74.60h2.56" stroke="#ce9178"/><path d="M15.00 74.60h0.64" stroke="#cccccc"/><path d="M7.96 75.91h3.20" stroke="#9cdcfe"/><path d="M11.16 75.91h0.64" stroke="#cccccc"/><path d="M12.44 75.91h3.20" stroke="#b5cea8"/><path d="M15.64 75.91h0.64" stroke="#cccccc"/><path d="M7.96 77.21h6.40" stroke="#9cdcfe"/><path d="M14.36 77.21h0.64" stroke="#cccccc"/><path d="M15.64 77.21h3.84" stroke="#ce9178"/><path d="M19.48 77.21h0.64" stroke="#cccccc"/><path d="M5.40 78.52h0.64" stroke="#ffd700"/><path d="M5.40 81.13h1.92" stroke="#d7ba7d"/><path d="M7.96 81.13h1.28" stroke="#d7ba7d"/><path d="M9.88 81.13h1.28" stroke="#d7ba7d"/><path d="M11.80 81.13h0.64" stroke="#d7ba7d"/><path d="M12.44 81.13h0.64" stroke="#ffd700"/><path d="M7.96 82.44h4.48" stroke="#9cdcfe"/><path d="M12.44 82.44h0.64" stroke="#cccccc"/><path d="M13.72 82.44h3.20" stroke="#ce9178"/><path d="M16.92 82.44h0.64" stroke="#cccccc"/><path d="M7.96 83.75h3.20" stroke="#9cdcfe"/><path d="M11.16 83.75h0.64" stroke="#cccccc"/><path d="M12.44 83.75h2.56" stroke="#ce9178"/><path d="M15.00 83.75h0.64" stroke="#cccccc"/><path d="M7.96 85.06h9.60" stroke="#9cdcfe"/><path d="M17.56 85.06h0.64" stroke="#cccccc"/><path d="M18.84 85.06h2.56" stroke="#ce9178"/><path d="M21.40 85.06h0.64" stroke="#cccccc"/><path d="M5.40 86.36h0.64" stroke="#ffd700"/><path d="M5.40 88.98h1.92" stroke="#d7ba7d"/><path d="M7.96 88.98h1.28" stroke="#d7ba7d"/><path d="M9.88 88.98h1.28" stroke="#d7ba7d"/><path d="M11.80 88.98h4.48" stroke="#d7ba7d"/><path d="M16.28 88.98h0.64" stroke="#ffd700"/><path d="M7.96 90.28h3.20" stroke="#9cdcfe"/><path d="M11.16 90.28h0.64" stroke="#cccccc"/><path d="M12.44 90.28h2.56" stroke="#ce9178"/><path d="M15.00 90.28h0.64" stroke="#cccccc"/><path d="M7.96 91.59h6.40" stroke="#9cdcfe"/><path d="M14.36 91.59h0.64" stroke="#cccccc"/><path d="M15.64 91.59h2.56" stroke="#ce9178"/><path d="M18.20 91.59h0.64" stroke="#cccccc"/><path d="M7.96 92.90h3.20" stroke="#9cdcfe"/><path d="M11.16 92.90h0.64" stroke="#cccccc"/><path d="M12.44 92.90h3.20" stroke="#b5cea8"/><path d="M15.64 92.90h0.64" stroke="#cccccc"/><path d="M7.96 94.20h3.84" stroke="#9cdcfe"/><path d="M11.80 94.20h0.64" stroke="#cccccc"/><path d="M13.08 94.20h2.56" stroke="#b5cea8"/><path d="M15.64 94.20h0.64" stroke="#cccccc"/><path d="M7.96 95.51h6.40" stroke="#9cdcfe"/><path d="M14.36 95.51h0.64" stroke="#cccccc"/><path d="M15.64 95.51h1.92" stroke="#ce9178"/><path d="M18.20 95.51h2.56" stroke="#ce9178"/><path d="M20.76 95.51h0.64" stroke="#cccccc"/><path d="M7.96 96.82h3.84" stroke="#9cdcfe"/><path d="M11.80 96.82h0.64" stroke="#cccccc"/><path d="M13.08 96.82h4.48" stroke="#ce9178"/><path d="M17.56 96.82h0.64" stroke="#cccccc"/><path d="M5.40 98.12h0.64" stroke="#ffd700"/><path d="M5.40 100.74h1.92" stroke="#d7ba7d"/><path d="M7.96 100.74h1.28" stroke="#d7ba7d"/><path d="M9.88 100.74h5.12" stroke="#d7ba7d"/><path d="M15.64 100.74h1.28" stroke="#d7ba7d"/><path d="M17.56 100.74h1.28" stroke="#d7ba7d"/><path d="M18.84 100.74h0.64" stroke="#ffd700"/><path d="M7.96 102.05h4.48" stroke="#9cdcfe"/><path d="M12.44 102.05h0.64" stroke="#cccccc"/><path d="M13.72 102.05h3.20" stroke="#ce9178"/><path d="M16.92 102.05h0.64" stroke="#cccccc"/><path d="M7.96 103.35h6.40" stroke="#9cdcfe"/><path d="M14.36 103.35h0.64" stroke="#cccccc"/><path d="M15.64 103.35h2.56" stroke="#ce9178"/><path d="M18.20 103.35h0.64" stroke="#cccccc"/><path d="M7.96 104.66h8.32" stroke="#9cdcfe"/><path d="M16.28 104.66h0.64" stroke="#cccccc"/><path d="M17.56 104.66h1.92" stroke="#b5cea8"/><path d="M20.12 104.66h3.20" stroke="#ce9178"/><path d="M23.96 104.66h2.56" stroke="#ce9178"/><path d="M26.52 104.66h0.64" stroke="#cccccc"/><path d="M5.40 105.97h0.64" stroke="#ffd700"/><path d="M5.40 108.58h1.92" stroke="#d7ba7d"/><path d="M7.96 108.58h1.28" stroke="#d7ba7d"/><path d="M9.88 108.58h1.28" stroke="#d7ba7d"/><path d="M11.16 108.58h0.64" stroke="#ffd700"/><path d="M7.96 109.89h4.48" stroke="#9cdcfe"/><path d="M12.44 109.89h0.64" stroke="#cccccc"/><path d="M13.72 109.89h2.56" stroke="#ce9178"/><path d="M16.28 109.89h0.64" stroke="#cccccc"/><path d="M7.96 111.19h5.12" stroke="#9cdcfe"/><path d="M13.08 111.19h0.64" stroke="#cccccc"/><path d="M14.36 111.19h5.12" stroke="#ce9178"/><path d="M19.48 111.19h0.64" stroke="#cccccc"/><path d="M7.96 112.50h1.92" stroke="#9cdcfe"/><path d="M9.88 112.50h0.64" stroke="#cccccc"/><path d="M11.16 112.50h2.56" stroke="#b5cea8"/><path d="M13.72 112.50h0.64" stroke="#cccccc"/><path d="M7.96 113.81h4.48" stroke="#9cdcfe"/><path d="M12.44 113.81h0.64" stroke="#cccccc"/><path d="M13.72 113.81h1.28" stroke="#b5cea8"/><path d="M15.00 113.81h0.64" stroke="#cccccc"/><path d="M7.96 115.12h6.40" stroke="#9cdcfe"/><path d="M14.36 115.12h0.64" stroke="#cccccc"/><path d="M15.64 115.12h0.64" stroke="#b5cea8"/><path d="M16.92 115.12h1.92" stroke="#b5cea8"/><path d="M19.48 115.12h1.92" stroke="#b5cea8"/><path d="M22.04 115.12h8.96" stroke="#ce9178"/><path d="M31.00 115.12h0.64" stroke="#cccccc"/><path d="M5.40 116.42h0.64" stroke="#ffd700"/><path d="M5.40 119.04h1.92" stroke="#d7ba7d"/><path d="M7.96 119.04h1.28" stroke="#d7ba7d"/><path d="M9.88 119.04h5.12" stroke="#d7ba7d"/><path d="M15.64 119.04h1.28" stroke="#d7ba7d"/><path d="M16.92 119.04h0.64" stroke="#ffd700"/><path d="M7.96 120.34h4.48" stroke="#9cdcfe"/><path d="M12.44 120.34h0.64" stroke="#cccccc"/><path d="M13.72 120.34h3.20" stroke="#ce9178"/><path d="M16.92 120.34h0.64" stroke="#cccccc"/><path d="M5.40 121.65h0.64" stroke="#ffd700"/><path d="M5.40 124.26h1.92" stroke="#d7ba7d"/><path d="M7.96 124.26h1.28" stroke="#d7ba7d"/><path d="M9.88 124.26h1.28" stroke="#d7ba7d"/><path d="M11.80 124.26h1.28" stroke="#d7ba7d"/><path d="M13.72 124.26h1.28" stroke="#d7ba7d"/><path d="M15.00 124.26h0.64" stroke="#ffd700"/><path d="M7.96 125.57h3.84" stroke="#9cdcfe"/><path d="M11.80 125.57h0.64" stroke="#cccccc"/><path d="M13.08 125.57h2.56" stroke="#b5cea8"/><path d="M15.64 125.57h0.64" stroke="#cccccc"/><path d="M7.96 126.88h3.20" stroke="#9cdcfe"/><path d="M11.16 126.88h0.64" stroke="#cccccc"/><path d="M12.44 126.88h3.20" stroke="#b5cea8"/><path d="M15.64 126.88h0.64" stroke="#cccccc"/><path d="M7.96 128.19h8.32" stroke="#9cdcfe"/><path d="M16.28 128.19h0.64" stroke="#cccccc"/><path d="M17.56 128.19h1.92" stroke="#b5cea8"/><path d="M19.48 128.19h0.64" stroke="#cccccc"/><path d="M5.40 129.49h0.64" stroke="#ffd700"/><path d="M5.40 132.11h1.92" stroke="#d7ba7d"/><path d="M7.96 132.11h1.28" stroke="#d7ba7d"/><path d="M9.88 132.11h1.28" stroke="#d7ba7d"/><path d="M11.80 132.11h1.28" stroke="#d7ba7d"/><path d="M13.72 132.11h1.28" stroke="#d7ba7d"/><path d="M15.64 132.11h0.64" stroke="#d7ba7d"/><path d="M16.28 132.11h0.64" stroke="#ffd700"/><path d="M7.96 133.41h4.48" stroke="#9cdcfe"/><path d="M12.44 133.41h0.64" stroke="#cccccc"/><path d="M13.72 133.41h1.92" stroke="#b5cea8"/><path d="M16.28 133.41h1.92" stroke="#b5cea8"/><path d="M18.20 133.41h0.64" stroke="#cccccc"/><path d="M5.40 134.72h0.64" stroke="#ffd700"/><path d="M5.40 137.33h7.68" stroke="#d7ba7d"/><path d="M13.08 137.33h0.64" stroke="#ffd700"/><path d="M7.96 138.64h3.84" stroke="#9cdcfe"/><path d="M11.80 138.64h0.64" stroke="#cccccc"/><path d="M13.08 138.64h0.64" stroke="#b5cea8"/><path d="M14.36 138.64h2.56" stroke="#ce9178"/><path d="M16.92 138.64h0.64" stroke="#cccccc"/><path d="M7.96 139.95h3.20" stroke="#9cdcfe"/><path d="M11.16 139.95h0.64" stroke="#cccccc"/><path d="M12.44 139.95h3.84" stroke="#b5cea8"/><path d="M16.28 139.95h0.64" stroke="#cccccc"/><path d="M7.96 141.26h3.84" stroke="#9cdcfe"/><path d="M11.80 141.26h0.64" stroke="#cccccc"/><path d="M13.08 141.26h3.20" stroke="#b5cea8"/><path d="M16.28 141.26h0.64" stroke="#cccccc"/><path d="M7.96 142.56h10.24" stroke="#9cdcfe"/><path d="M18.20 142.56h0.64" stroke="#cccccc"/><path d="M19.48 142.56h2.56" stroke="#ce9178"/><path d="M22.04 142.56h0.64" stroke="#cccccc"/><path d="M7.96 143.87h5.12" stroke="#9cdcfe"/><path d="M13.08 143.87h0.64" stroke="#cccccc"/><path d="M14.36 143.87h3.84" stroke="#ce9178"/><path d="M18.20 143.87h0.64" stroke="#cccccc"/><path d="M7.96 145.18h5.12" stroke="#9cdcfe"/><path d="M13.08 145.18h0.64" stroke="#cccccc"/><path d="M14.36 145.18h5.12" stroke="#ce9178"/><path d="M19.48 145.18h0.64" stroke="#cccccc"/><path d="M5.40 146.48h0.64" stroke="#ffd700"/><path d="M5.40 149.10h7.68" stroke="#d7ba7d"/><path d="M13.72 149.10h4.48" stroke="#d7ba7d"/><path d="M18.20 149.10h0.64" stroke="#ffd700"/><path d="M7.96 150.41h3.20" stroke="#9cdcfe"/><path d="M11.16 150.41h0.64" stroke="#cccccc"/><path d="M12.44 150.41h2.56" stroke="#b5cea8"/><path d="M15.00 150.41h0.64" stroke="#cccccc"/><path d="M7.96 151.71h3.84" stroke="#9cdcfe"/><path d="M11.80 151.71h0.64" stroke="#cccccc"/><path d="M13.08 151.71h2.56" stroke="#b5cea8"/><path d="M15.64 151.71h0.64" stroke="#cccccc"/><path d="M7.96 153.02h5.12" stroke="#9cdcfe"/><path d="M13.08 153.02h0.64" stroke="#cccccc"/><path d="M14.36 153.02h5.12" stroke="#ce9178"/><path d="M19.48 153.02h0.64" stroke="#cccccc"/><path d="M7.96 154.33h1.92" stroke="#9cdcfe"/><path d="M9.88 154.33h0.64" stroke="#cccccc"/><path d="M11.16 154.33h1.92" stroke="#b5cea8"/><path d="M13.08 154.33h0.64" stroke="#cccccc"/><path d="M7.96 155.63h6.40" stroke="#9cdcfe"/><path d="M14.36 155.63h0.64" stroke="#cccccc"/><path d="M15.64 155.63h1.92" stroke="#ce9178"/><path d="M18.20 155.63h7.04" stroke="#ce9178"/><path d="M25.88 155.63h3.20" stroke="#b5cea8"/><path d="M29.08 155.63h0.64" stroke="#cccccc"/><path d="M7.96 156.94h11.52" stroke="#9cdcfe"/><path d="M19.48 156.94h0.64" stroke="#cccccc"/><path d="M20.76 156.94h1.92" stroke="#ce9178"/><path d="M23.32 156.94h7.04" stroke="#ce9178"/><path d="M31.00 156.94h3.20" stroke="#b5cea8"/><path d="M34.20 156.94h0.64" stroke="#cccccc"/><path d="M7.96 158.25h9.60" stroke="#9cdcfe"/><path d="M17.56 158.25h0.64" stroke="#cccccc"/><path d="M18.84 158.25h1.92" stroke="#ce9178"/><path d="M21.40 158.25h7.04" stroke="#ce9178"/><path d="M29.08 158.25h3.20" stroke="#b5cea8"/><path d="M32.28 158.25h0.64" stroke="#cccccc"/><path d="M7.96 159.55h8.32" stroke="#9cdcfe"/><path d="M16.28 159.55h0.64" stroke="#cccccc"/><path d="M17.56 159.55h1.92" stroke="#ce9178"/><path d="M20.12 159.55h7.04" stroke="#ce9178"/><path d="M27.80 159.55h3.20" stroke="#b5cea8"/><path d="M31.00 159.55h0.64" stroke="#cccccc"/><path d="M5.40 160.86h0.64" stroke="#ffd700"/><path d="M5.40 163.47h7.68" stroke="#d7ba7d"/><path d="M13.72 163.47h5.12" stroke="#d7ba7d"/><path d="M19.48 163.47h0.64" stroke="#ffd700"/><path d="M7.96 164.78h10.24" stroke="#9cdcfe"/><path d="M18.20 164.78h0.64" stroke="#cccccc"/><path d="M19.48 164.78h6.40" stroke="#ce9178"/><path d="M25.88 164.78h0.64" stroke="#cccccc"/><path d="M7.96 166.09h9.60" stroke="#9cdcfe"/><path d="M17.56 166.09h0.64" stroke="#cccccc"/><path d="M18.84 166.09h3.20" stroke="#ce9178"/><path d="M22.04 166.09h0.64" stroke="#cccccc"/><path d="M7.96 167.40h12.16" stroke="#9cdcfe"/><path d="M20.12 167.40h0.64" stroke="#cccccc"/><path d="M21.40 167.40h3.84" stroke="#ce9178"/><path d="M25.24 167.40h0.64" stroke="#cccccc"/><path d="M7.96 168.70h4.48" stroke="#9cdcfe"/><path d="M12.44 168.70h0.64" stroke="#cccccc"/><path d="M13.72 168.70h0.64" stroke="#b5cea8"/><path d="M14.36 168.70h0.64" stroke="#cccccc"/><path d="M5.40 170.01h0.64" stroke="#ffd700"/><path d="M5.40 172.62h7.68" stroke="#d7ba7d"/><path d="M13.72 172.62h5.12" stroke="#d7ba7d"/><path d="M19.48 172.62h0.64" stroke="#ffd700"/><path d="M7.96 173.93h10.24" stroke="#9cdcfe"/><path d="M18.20 173.93h0.64" stroke="#cccccc"/><path d="M19.48 173.93h6.40" stroke="#ce9178"/><path d="M25.88 173.93h0.64" stroke="#cccccc"/><path d="M7.96 175.24h9.60" stroke="#9cdcfe"/><path d="M17.56 175.24h0.64" stroke="#cccccc"/><path d="M18.84 175.24h3.20" stroke="#ce9178"/><path d="M22.04 175.24h0.64" stroke="#cccccc"/><path d="M7.96 176.54h12.16" stroke="#9cdcfe"/><path d="M20.12 176.54h0.64" stroke="#cccccc"/><path d="M21.40 176.54h3.84" stroke="#ce9178"/><path d="M25.24 176.54h0.64" stroke="#cccccc"/><path d="M7.96 177.85h4.48" stroke="#9cdcfe"/><path d="M12.44 177.85h0.64" stroke="#cccccc"/><path d="M13.72 177.85h0.64" stroke="#b5cea8"/><path d="M14.36 177.85h0.64" stroke="#cccccc"/><path d="M5.40 179.16h0.64" stroke="#ffd700"/><path d="M5.40 181.77h7.68" stroke="#d7ba7d"/><path d="M13.72 181.77h5.12" stroke="#d7ba7d"/><path d="M19.48 181.77h0.64" stroke="#ffd700"/><path d="M7.96 183.08h10.24" stroke="#9cdcfe"/><path d="M18.20 183.08h0.64" stroke="#cccccc"/><path d="M19.48 183.08h6.40" stroke="#ce9178"/><path d="M25.88 183.08h0.64" stroke="#cccccc"/><path d="M7.96 184.39h9.60" stroke="#9cdcfe"/><path d="M17.56 184.39h0.64" stroke="#cccccc"/><path d="M18.84 184.39h3.20" stroke="#ce9178"/><path d="M22.04 184.39h0.64" stroke="#cccccc"/><path d="M7.96 185.69h12.16" stroke="#9cdcfe"/><path d="M20.12 185.69h0.64" stroke="#cccccc"/><path d="M21.40 185.69h3.84" stroke="#ce9178"/><path d="M25.24 185.69h0.64" stroke="#cccccc"/><path d="M7.96 187.00h4.48" stroke="#9cdcfe"/><path d="M12.44 187.00h0.64" stroke="#cccccc"/><path d="M13.72 187.00h0.64" stroke="#b5cea8"/><path d="M14.36 187.00h0.64" stroke="#cccccc"/><path d="M5.40 188.31h0.64" stroke="#ffd700"/><path d="M5.40 190.92h7.68" stroke="#d7ba7d"/><path d="M13.72 190.92h7.04" stroke="#d7ba7d"/><path d="M21.40 190.92h0.64" stroke="#ffd700"/><path d="M7.96 192.23h3.20" stroke="#9cdcfe"/><path d="M11.16 192.23h0.64" stroke="#cccccc"/><path d="M12.44 192.23h2.56" stroke="#b5cea8"/><path d="M15.00 192.23h0.64" stroke="#cccccc"/><path d="M7.96 193.54h3.84" stroke="#9cdcfe"/><path d="M11.80 193.54h0.64" stroke="#cccccc"/><path d="M13.08 193.54h2.56" stroke="#b5cea8"/><path d="M15.64 193.54h0.64" stroke="#cccccc"/><path d="M7.96 194.84h6.40" stroke="#9cdcfe"/><path d="M14.36 194.84h0.64" stroke="#cccccc"/><path d="M15.64 194.84h9.60" stroke="#ce9178"/><path d="M25.24 194.84h0.64" stroke="#cccccc"/><path d="M7.96 196.15h6.40" stroke="#9cdcfe"/><path d="M14.36 196.15h0.64" stroke="#cccccc"/><path d="M15.64 196.15h3.84" stroke="#ce9178"/><path d="M19.48 196.15h0.64" stroke="#cccccc"/><path d="M7.96 197.46h6.40" stroke="#9cdcfe"/><path d="M14.36 197.46h0.64" stroke="#cccccc"/><path d="M15.64 197.46h1.92" stroke="#ce9178"/><path d="M18.20 197.46h7.04" stroke="#ce9178"/><path d="M25.88 197.46h3.20" stroke="#b5cea8"/><path d="M29.08 197.46h0.64" stroke="#cccccc"/><path d="M5.40 198.76h0.64" stroke="#ffd700"/><path d="M5.40 202.68h7.68" stroke="#d7ba7d"/><path d="M13.72 202.68h7.04" stroke="#d7ba7d"/><path d="M21.40 202.68h1.28" stroke="#d7ba7d"/><path d="M22.68 202.68h0.64" stroke="#ffd700"/><path d="M7.96 203.99h5.76" stroke="#9cdcfe"/><path d="M13.72 203.99h0.64" stroke="#cccccc"/><path d="M15.00 203.99h2.56" stroke="#b5cea8"/><path d="M17.56 203.99h0.64" stroke="#cccccc"/><path d="M5.40 205.30h0.64" stroke="#ffd700"/><path d="M5.40 209.22h7.68" stroke="#d7ba7d"/><path d="M13.72 209.22h7.04" stroke="#d7ba7d"/><path d="M21.40 209.22h0.64" stroke="#d7ba7d"/><path d="M22.68 209.22h0.64" stroke="#ffd700"/><path d="M7.96 210.53h5.76" stroke="#9cdcfe"/><path d="M13.72 210.53h0.64" stroke="#cccccc"/><path d="M15.00 210.53h2.56" stroke="#b5cea8"/><path d="M17.56 210.53h0.64" stroke="#cccccc"/><path d="M7.96 211.83h3.20" stroke="#9cdcfe"/><path d="M11.16 211.83h0.64" stroke="#cccccc"/><path d="M12.44 211.83h2.56" stroke="#ce9178"/><path d="M15.00 211.83h0.64" stroke="#cccccc"/><path d="M7.96 213.14h3.84" stroke="#9cdcfe"/><path d="M11.80 213.14h0.64" stroke="#cccccc"/><path d="M13.08 213.14h2.56" stroke="#b5cea8"/><path d="M15.64 213.14h0.64" stroke="#cccccc"/><path d="M7.96 214.45h4.48" stroke="#9cdcfe"/><path d="M12.44 214.45h0.64" stroke="#cccccc"/><path d="M13.72 214.45h1.92" stroke="#b5cea8"/><path d="M16.28 214.45h1.92" stroke="#b5cea8"/><path d="M18.20 214.45h0.64" stroke="#cccccc"/><path d="M5.40 215.75h0.64" stroke="#ffd700"/><path d="M5.40 218.37h7.68" stroke="#d7ba7d"/><path d="M13.72 218.37h7.04" stroke="#d7ba7d"/><path d="M21.40 218.37h0.64" stroke="#d7ba7d"/><path d="M22.04 218.37h0.64" stroke="#ffd700"/><path d="M7.96 219.68h3.20" stroke="#9cdcfe"/><path d="M11.16 219.68h0.64" stroke="#cccccc"/><path d="M12.44 219.68h2.56" stroke="#ce9178"/><path d="M15.00 219.68h0.64" stroke="#cccccc"/><path d="M5.40 220.98h0.64" stroke="#ffd700"/><path d="M5.40 224.90h4.48" stroke="#d7ba7d"/><path d="M10.52 224.90h0.64" stroke="#ffd700"/><path d="M7.96 226.21h10.24" stroke="#9cdcfe"/><path d="M18.20 226.21h0.64" stroke="#cccccc"/><path d="M19.48 226.21h2.56" stroke="#ce9178"/><path d="M22.04 226.21h0.64" stroke="#cccccc"/><path d="M5.40 227.52h0.64" stroke="#ffd700"/><path d="M5.40 230.13h3.20" stroke="#d7ba7d"/><path d="M8.60 230.13h0.64" stroke="#ffd700"/><path d="M7.96 231.44h3.20" stroke="#9cdcfe"/><path d="M11.16 231.44h0.64" stroke="#cccccc"/><path d="M12.44 231.44h2.56" stroke="#b5cea8"/><path d="M15.00 231.44h0.64" stroke="#cccccc"/><path d="M7.96 232.75h3.84" stroke="#9cdcfe"/><path d="M11.80 232.75h0.64" stroke="#cccccc"/><path d="M13.08 232.75h2.56" stroke="#b5cea8"/><path d="M15.64 232.75h0.64" stroke="#cccccc"/><path d="M7.96 234.05h3.20" stroke="#9cdcfe"/><path d="M11.16 234.05h0.64" stroke="#cccccc"/><path d="M12.44 234.05h2.56" stroke="#ce9178"/><path d="M15.00 234.05h0.64" stroke="#cccccc"/><path d="M7.96 235.36h6.40" stroke="#9cdcfe"/><path d="M14.36 235.36h0.64" stroke="#cccccc"/><path d="M15.64 235.36h0.64" stroke="#b5cea8"/><path d="M16.92 235.36h2.56" stroke="#b5cea8"/><path d="M20.12 235.36h1.92" stroke="#b5cea8"/><path d="M22.68 235.36h8.96" stroke="#ce9178"/><path d="M31.64 235.36h0.64" stroke="#cccccc"/><path d="M5.40 236.67h0.64" stroke="#ffd700"/></svg>
<div class="abs" style="left:1236px;top:90px;width:1px;height:591px;background:#171717"></div>
<div class="abs" style="left:1237px;top:352px;width:13px;height:87px;background:#434343"></div>
<div class="abs" style="left:1237px;top:90px;width:13px;height:2px;background:#8a8a8a"></div>
<div class="abs" style="left:0;top:681px;width:1250px;height:22px;background:#181818;border-top:1px solid #2b2b2b"></div>
<svg style="left:9px;top:684px" width="14" height="15" viewBox="0 0 14 15"><path d="M1.4 5.2L6.2 9.2 1.8 13.6M12.2 1.2L7.4 5.2 12.2 9.6" stroke="#cccccc" stroke-width="1.15" fill="none"/></svg>
<svg style="left:39px;top:683.5px" width="16" height="16" viewBox="0 0 16 16"><circle cx="7.8" cy="7.7" r="6.3" stroke="#cccccc" stroke-width="1.1" fill="none"/><path d="M5.2 5.1L10.4 10.3M10.4 5.1L5.2 10.3" stroke="#cccccc" stroke-width="1.1"/></svg>
<div class="abs" style="left:57.6px;top:680px;height:23px;line-height:23px;font-size:11.7px;color:#cccccc;white-space:pre;transform:scaleX(1);transform-origin:0 0">0</div>
<svg style="left:67px;top:683px" width="17" height="15" viewBox="0 0 17 15"><path d="M8 1.2L1.2 13.8h13.6z" stroke="#cccccc" stroke-width="1.1" fill="none" stroke-linejoin="round"/><path d="M8 5.4v4.6" stroke="#cccccc" stroke-width="1.3"/><circle cx="8" cy="11.8" r="0.75" fill="#cccccc"/></svg>
<div class="abs" style="left:85.6px;top:680px;height:23px;line-height:23px;font-size:11.7px;color:#cccccc;white-space:pre;transform:scaleX(1);transform-origin:0 0">0</div>
<div class="abs" style="left:912.3px;top:680px;height:23px;line-height:23px;font-size:11.7px;color:#cccccc;white-space:pre;transform:scaleX(0.92);transform-origin:0 0">Ln 1, Col 1</div>
<div class="abs" style="left:981.5px;top:680px;height:23px;line-height:23px;font-size:11.7px;color:#cccccc;white-space:pre;transform:scaleX(0.9);transform-origin:0 0">Tab Size: 4</div>
<div class="abs" style="left:1050.3px;top:680px;height:23px;line-height:23px;font-size:11.7px;color:#cccccc;white-space:pre;transform:scaleX(0.9);transform-origin:0 0">UTF-8</div>
<div class="abs" style="left:1097.3px;top:680px;height:23px;line-height:23px;font-size:11.7px;color:#cccccc;white-space:pre;transform:scaleX(0.83);transform-origin:0 0">CRLF</div>
<div class="abs" style="left:1139.5px;top:680px;height:23px;line-height:23px;font-size:11.7px;color:#cccccc;white-space:pre;transform:scaleX(1.0);transform-origin:0 0">{ }</div>
<div class="abs" style="left:1159px;top:680px;height:23px;line-height:23px;font-size:11.7px;color:#cccccc;white-space:pre;transform:scaleX(0.85);transform-origin:0 0">CSS</div>
<svg style="left:1193px;top:683px" width="20" height="17" viewBox="0 0 20 17"><circle cx="7.7" cy="4.5" r="2.7" stroke="#cccccc" stroke-width="1.3" fill="none"/><circle cx="12.9" cy="4.5" r="2.7" stroke="#cccccc" stroke-width="1.3" fill="none"/><path d="M5.2 7.4C3.4 7.8 2.6 9 2.6 10.6c0 2.8 3.4 4.4 7.7 4.4s7.7-1.6 7.7-4.4c0-1.6-.8-2.8-2.6-3.2" stroke="#cccccc" stroke-width="1.3" fill="none"/><path d="M5 9.2h10.6" stroke="#cccccc" stroke-width="1"/><rect x="7.8" y="9.4" width="1.3" height="2.8" fill="#cccccc"/><rect x="11.4" y="9.4" width="1.3" height="2.8" fill="#cccccc"/></svg>
<svg style="left:1227px;top:683px" width="15" height="17" viewBox="0 0 15 17"><path d="M1.4 12.4C2.5 11.3 2.8 10.2 2.8 8.6V6.4A4.6 4.6 0 0 1 12 6.4v2.2c0 1.6.3 2.7 1.4 3.8z" stroke="#cccccc" stroke-width="1.15" fill="none" stroke-linejoin="round"/><circle cx="7.4" cy="13.9" r="1.3" stroke="#cccccc" stroke-width="1" fill="none"/></svg>
</body></html>
